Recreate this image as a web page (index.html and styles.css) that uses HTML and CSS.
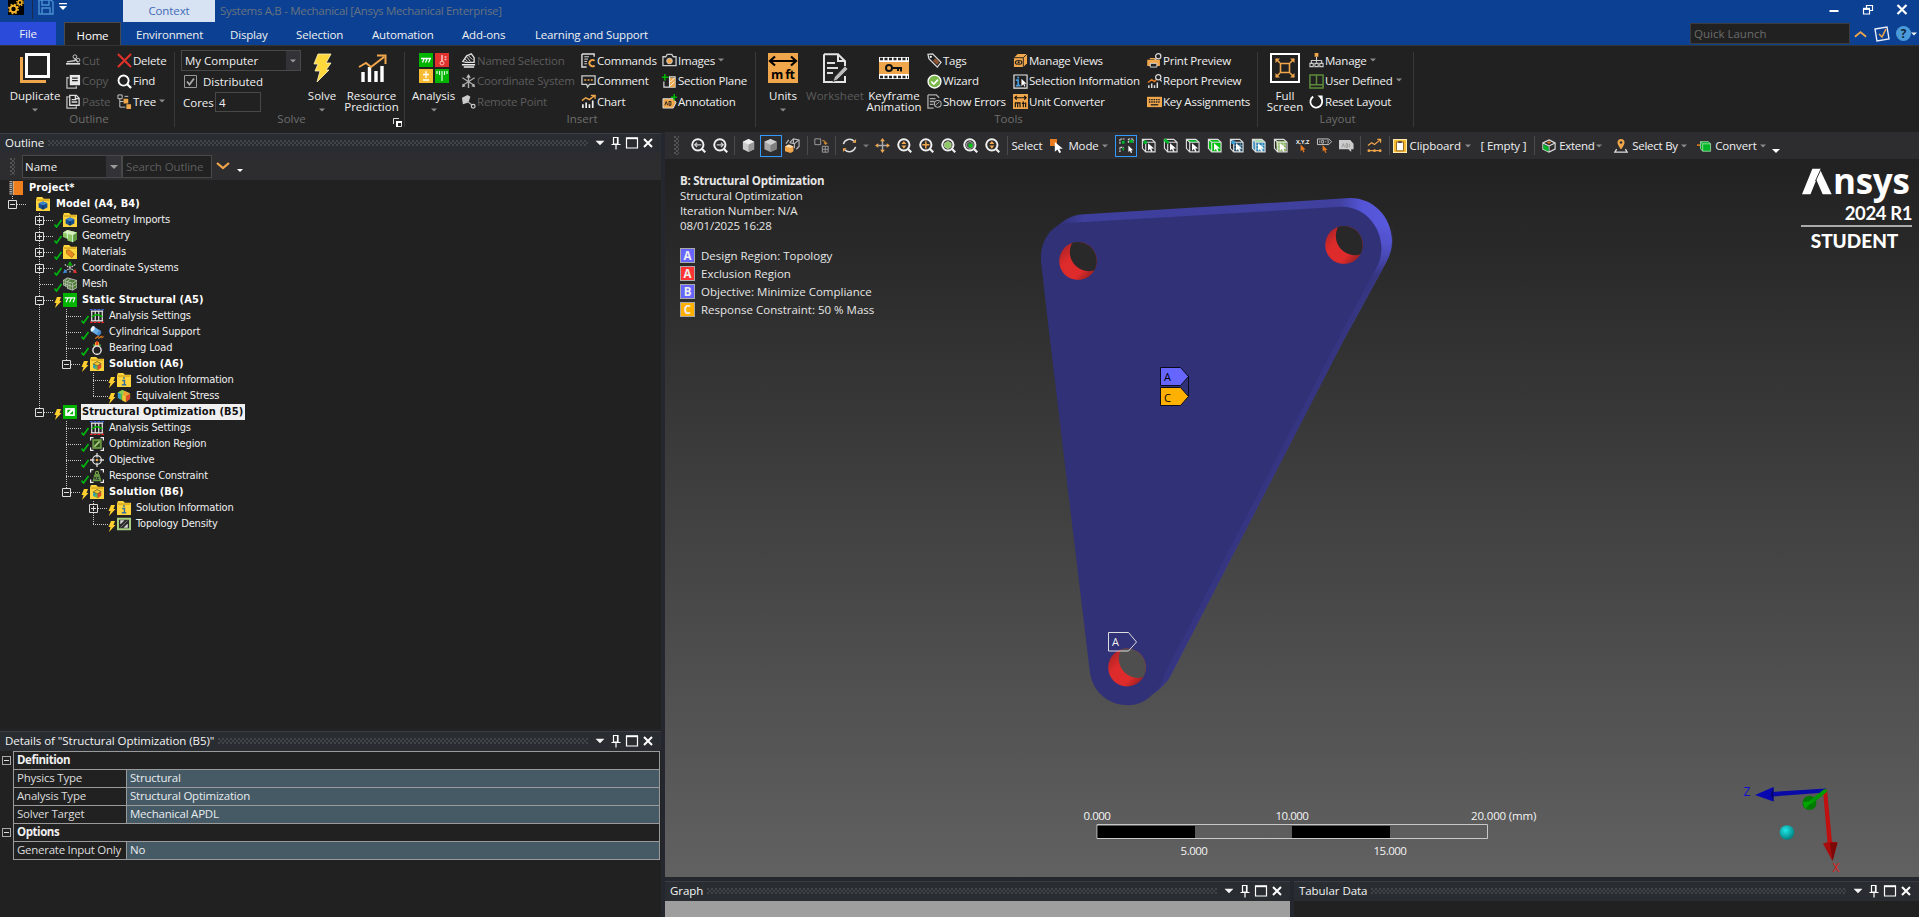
FILE: index.html
```html
<!DOCTYPE html>
<html lang="en">
<head>
<meta charset="utf-8">
<title>Systems A,B - Mechanical [Ansys Mechanical Enterprise]</title>
<link rel="stylesheet" href="styles.css">
</head>
<body>
<svg class="defs" aria-hidden="true">
<defs>
<symbol id="down" viewBox="0 0 8 8"><path d="M0 2h8L4 6z" fill="currentColor"/></symbol>
<symbol id="pin" viewBox="0 0 16 16"><path d="M5.500 2.500h4.500v6.500h-4.500zM3.500 9.500h9M8 9.500v5M9.500 3v6" fill="none" stroke="#fff" stroke-width="1.200"/></symbol>
<symbol id="max" viewBox="0 0 16 16"><path d="M2.500 3h11v10h-11z" fill="none" stroke="#fff" stroke-width="1.200"/><path d="M2 3.300h12" stroke="#fff" stroke-width="1.800"/></symbol>
<symbol id="x" viewBox="0 0 16 16"><path d="M4 4l8 8M12 4l-8 8" stroke="#fff" stroke-width="2"/></symbol>
<symbol id="gears" viewBox="0 0 16 16"><rect width="16" height="16" fill="#000"/><circle cx="5.500" cy="10" r="3.200" fill="none" stroke="#f5b52a" stroke-width="2"/><circle cx="5.500" cy="10" r="4.600" fill="none" stroke="#f5b52a" stroke-width="1.600" stroke-dasharray="1.800 1.810"/><circle cx="12" cy="3.500" r="2" fill="none" stroke="#f5b52a" stroke-width="1.600"/><circle cx="12" cy="3.500" r="3.300" fill="none" stroke="#f5b52a" stroke-width="1.200" stroke-dasharray="1.300 1.290"/></symbol>
<symbol id="save" viewBox="0 0 16 16"><path d="M1 1h12l2 2v12H1zM4 1v5h7V1M4 15V9h8v6" fill="none" stroke="#4a90d2" stroke-width="1.400"/></symbol>
<symbol id="cut" viewBox="0 0 16 16"><path d="M0 11.500h15" stroke="#ddd" stroke-width="1.800"/><path d="M1 9.500l9-1.500M9 6l4 4" stroke="#ccc" stroke-width="1.500"/><circle cx="9.500" cy="4" r="2" fill="none" stroke="#ccc"/><circle cx="13" cy="7.500" r="1.800" fill="none" stroke="#ccc"/></symbol>
<symbol id="copy" viewBox="0 0 16 16"><path d="M3 4H1v11h10v-2" fill="none" stroke="#bbb" stroke-width="1.400"/><path d="M4 1h11v11H4z" fill="#e8e8e8"/><path d="M6.500 4.500h6M6.500 7h6" stroke="#222" stroke-width="1.300"/></symbol>
<symbol id="paste" viewBox="0 0 16 16"><path d="M3 3H1v12h10v-2" fill="none" stroke="#bbb" stroke-width="1.400"/><path d="M4 1.500h7l3 3V12H4z" fill="#222" stroke="#ddd" stroke-width="1.400"/><path d="M10 1.500V5h4M6 6h5M6 8.500h6" fill="none" stroke="#ddd" stroke-width="1.400"/></symbol>
<symbol id="del" viewBox="0 0 16 16"><path d="M1 1l14 14M15 1L1 15" stroke="#e0322c" stroke-width="2.200"/></symbol>
<symbol id="find" viewBox="0 0 16 16"><circle cx="7" cy="7" r="5.400" fill="none" stroke="#fff" stroke-width="2"/><path d="M11 11l4 4" stroke="#fff" stroke-width="2.400"/></symbol>
<symbol id="treei" viewBox="0 0 16 16"><path d="M3 5v9h6M3 8h4" fill="none" stroke="#ccc"/><path d="M1 1h4.500v4H1z" fill="none" stroke="#ccc"/><path d="M7 5h5v5H7zM10 11h5v5h-5z" fill="#f0a64a"/><path d="M8 2.500h4" stroke="#ccc"/></symbol>
<symbol id="named" viewBox="0 0 16 16"><path d="M2 9l4-6 5-2 3 4v5H5z" fill="none" stroke="#ddd" stroke-width="1.500"/><path d="M6 4l4 5M4 6l3 3M8 3l4 4" stroke="#ddd"/><path d="M1 12.500h14M3 15h11" stroke="#eee" stroke-width="1.600"/></symbol>
<symbol id="coord" viewBox="0 0 16 16"><path d="M8 1v14M1.500 4L14 12M14.500 4L2 12" stroke="#aaa" stroke-width="1.500"/><path d="M8 0l2.500 4h-5zM1 14l1-4 3 3zM15 14l-1-4-3 3z" fill="#bbb"/></symbol>
<symbol id="coordc" viewBox="0 0 16 16"><path d="M8 2v6M2 4l12 8M14 4L2 12M8 8v6" stroke="#ccc" stroke-width="1.300" stroke-dasharray="2 1"/><path d="M8 0l3 5H5z" fill="#00a800"/><path d="M0 14l2-5 3 4z" fill="#3a8be0"/><path d="M16 14l-2-5-3 4z" fill="#e0322c"/></symbol>
<symbol id="remote" viewBox="0 0 16 16"><path d="M1 4l6-3 3 2-2 6-6 2z" fill="#ccc"/><path d="M7 8l5 4" stroke="#aaa" stroke-width="1.300"/><circle cx="13" cy="13" r="2" fill="none" stroke="#ccc" stroke-width="1.300"/></symbol>
<symbol id="cmd" viewBox="0 0 16 16"><path d="M1 1h13v3M1 1v14h5" fill="none" stroke="#ddd" stroke-width="1.500"/><path d="M3.500 4h5M3.500 6.500h4M3.500 9h3M3.500 11.500h3" stroke="#ddd"/><path d="M14.500 8.300a3.300 3.300 0 1 0 0 5" fill="none" stroke="#f0a64a" stroke-width="2"/></symbol>
<symbol id="comment" viewBox="0 0 16 16"><path d="M1 2h14v9H9l-2 3-1-3H1z" fill="none" stroke="#ccc" stroke-width="1.400"/><path d="M3.500 6.500h2M7 6.500h2M10.500 6.500h2" stroke="#f0a64a" stroke-width="1.600"/></symbol>
<symbol id="chart" viewBox="0 0 16 16"><path d="M2 15v-4M5.500 15V9M9 15v-4M12.500 15V7" stroke="#eee" stroke-width="1.800"/><path d="M1 7l4-3 4 2 5-4M10.500 1.500H15V5" fill="none" stroke="#f0a64a" stroke-width="1.500"/></symbol>
<symbol id="cam" viewBox="0 0 16 16"><path d="M1 4h3l1.500-2.500h5L12 4h3v9.500H1z" fill="none" stroke="#ccc" stroke-width="1.400"/><circle cx="8" cy="8.500" r="3" fill="#f0a64a" stroke="#ccc"/></symbol>
<symbol id="section" viewBox="0 0 16 16"><path d="M3 0v7M0 3.500h7" stroke="#00b400" stroke-width="1.600"/><path d="M2 8v6h6M8 3h6v11H8z" fill="none" stroke="#ddd" stroke-width="1.200"/><path d="M8.500 4h5.500v10H8.500z" fill="#f0a64a"/><path d="M8.500 9l5-5M8.500 13l5-5" stroke="#fff"/></symbol>
<symbol id="annot" viewBox="0 0 16 16"><path d="M1 5h11l3 4-3 6H1z" fill="#f0a64a" stroke="#ddd"/><path d="M3 12l1.500-4L6 12M7.500 8v4h2V8z" fill="none" stroke="#222"/><path d="M13 0v7M9.500 3.500h6.500" stroke="#00b400" stroke-width="1.600"/></symbol>
<symbol id="tag" viewBox="0 0 16 16"><path d="M1 1.500l5-.5 9 9-4 5-9-9z" fill="none" stroke="#ddd" stroke-width="1.300"/><path d="M7.500 7l4.500 4" stroke="#8a5230" stroke-width="4"/><circle cx="4" cy="4" r="1.200" fill="#fff"/></symbol>
<symbol id="wiz" viewBox="0 0 16 16"><circle cx="8" cy="8" r="6.900" fill="#7ab648" stroke="#fff" stroke-width="1.400"/><path d="M4.500 8l2.700 2.800L11.800 6" fill="none" stroke="#fff" stroke-width="1.800"/></symbol>
<symbol id="errs" viewBox="0 0 16 16"><path d="M1 1h9l3 3M1 1v14h6M3 5h6M3 8h5M3 11h4" fill="none" stroke="#aaa" stroke-width="1.400"/><circle cx="11.500" cy="10.500" r="3.600" fill="#222" stroke="#aaa" stroke-width="1.200"/><path d="M9 12l4-3.500" stroke="#aaa"/></symbol>
<symbol id="views" viewBox="0 0 16 16"><path d="M1 5l4-4h10v10l-4 4H1z" fill="#f0a64a"/><path d="M1 5h10v10M11 5l4-4" fill="none" stroke="#222"/><ellipse cx="6" cy="10" rx="3.500" ry="2" fill="none" stroke="#222" stroke-width="1.200"/><circle cx="6" cy="10" r="1.200" fill="#222"/></symbol>
<symbol id="selinfo" viewBox="0 0 16 16"><path d="M1 1h14v14H1z" fill="none" stroke="#eee" stroke-width="1.200"/><path d="M3 6.500h2.500V12M3 12.300h5M4.500 3.800h2" fill="none" stroke="#4a9ada" stroke-width="1.800"/><path d="M9 5v8l2-2 1.200 2.500 1-.6L12 10.500h2.500z" fill="#fff"/></symbol>
<symbol id="conv" viewBox="0 0 16 16"><path d="M0 0h16v16H0z" fill="#f0a64a"/><path d="M2 4h12M4 2L2 4l2 2M12 2l2 2-2 2" fill="none" stroke="#111" stroke-width="1.300"/><path d="M2.500 14V9.500h5V14M5 14V9.500M11 14V8M9.500 10h3M13.500 9v5" fill="none" stroke="#111" stroke-width="1.200"/></symbol>
<symbol id="print" viewBox="0 0 16 16"><circle cx="12" cy="3.500" r="2.800" fill="none" stroke="#ddd" stroke-width="1.300"/><path d="M10 6L8 8" stroke="#ddd" stroke-width="1.300"/><path d="M3 6h6M1 8h12v5H1z" fill="#f0a64a" stroke="#f0a64a" stroke-width="1.500"/><path d="M3.500 11h7v4h-7z" fill="#222" stroke="#ddd"/></symbol>
<symbol id="report" viewBox="0 0 16 16"><path d="M2 15v-3M5 15v-5M8 15v-3M11 15V9" stroke="#ddd" stroke-width="1.600"/><path d="M1 9l4-3 3 2 2-2" fill="none" stroke="#e57d22" stroke-width="1.500"/><circle cx="12" cy="3.500" r="2.800" fill="none" stroke="#ddd" stroke-width="1.300"/><path d="M14 6l1.500 2" stroke="#ddd" stroke-width="1.300"/></symbol>
<symbol id="keys" viewBox="0 0 16 16"><path d="M0 3h16v11H0z" fill="#f0a64a"/><path d="M2 6h12M2 8.500h12" stroke="#222" stroke-width="1.500" stroke-dasharray="1.600 .9"/><path d="M4 11.500h8" stroke="#222" stroke-width="1.400"/></symbol>
<symbol id="org" viewBox="0 0 16 16"><path d="M8 4v6M2.500 11V8h11v3M1 11h3.500v3.500H1zM6.300 11h3.500v3.500H6.300zM11.500 11H15v3.500h-3.500z" fill="none" stroke="#ccc" stroke-width="1.200"/><path d="M6 0h4v4H6z" fill="#f0a64a"/></symbol>
<symbol id="user" viewBox="0 0 16 16"><path d="M1 1h14v14H1zM1 11.500h14M8 1v10" fill="none" stroke="#5c8a3a" stroke-width="1.600"/></symbol>
<symbol id="reset" viewBox="0 0 16 16"><path d="M4.500 2.800A6.300 6.300 0 1 0 12.500 4" fill="none" stroke="#fff" stroke-width="1.900"/><path d="M9 1.500h5.500V7z" fill="#fff"/></symbol>

<symbol id="lens" viewBox="0 0 16 16"><circle cx="7.300" cy="7.300" r="6" fill="none" stroke="#f0f0f0" stroke-width="2.100"/><path d="M11.500 11.500l3.700 3.700" stroke="#f0f0f0" stroke-width="2.400"/></symbol>
<symbol id="cube" viewBox="0 0 16 16"><path d="M8 1l6 3v8l-6 3-6-3V4z" fill="#ccc"/><path d="M8 7l6-3v8l-6 3z" fill="#999"/><path d="M8 1l6 3-6 3-6-3z" fill="#eee"/></symbol>
<symbol id="cube2" viewBox="0 0 16 16"><path d="M8 1l6.500 3v8L8 15l-6.500-3V4z" fill="#a8a8a8"/><path d="M8 7.500L14.500 4v8L8 15z" fill="#808080"/><path d="M8 1l6.500 3L8 7.500 1.500 4z" fill="#d0d0d0"/></symbol>
<symbol id="cubeb" viewBox="0 0 16 16"><path d="M1.500 1.500h10l3.500 3v10.300H5L1.500 11zM1.500 1.500L5 4.500h10M5 4.500v10" fill="none" stroke="#ddd" stroke-width="1.200"/></symbol>
<symbol id="cur" viewBox="0 0 16 16"><path d="M7.500 5.500v8l2-1.800 1.400 3 1.400-.6-1.300-3H14z" fill="#fff"/></symbol>

<symbol id="check" viewBox="0 0 8 9"><path d="M.5 5.500l2 2.500L7.500 1" fill="none" stroke="#00b010" stroke-width="1.800"/></symbol>
<symbol id="bolt" viewBox="0 0 8 11"><path d="M3 0h4L5.500 4H7.500L1 11l1.500-5H.5z" fill="#ffcf30"/></symbol>
<symbol id="book" viewBox="0 0 16 16"><path d="M5 0h11v16H5z" fill="#ee7f1e"/><path d="M4.800 0v16" stroke="#f8e0c8"/><path d="M2 0v16" stroke="#aaa" stroke-width="3" stroke-dasharray="1.500 .7"/></symbol>
<symbol id="fold" viewBox="0 0 16 16"><path d="M0 3l1-3h6l2 2h7v14H0z" fill="#ffd33c"/><path d="M1 3.500h14" stroke="#b88a10"/></symbol>
<symbol id="f-model" viewBox="0 0 16 16"><use href="#fold"/><path d="M8 5l5 2v5l-5 2.500L3 12V7z" fill="#154f90"/><path d="M8 5l5 2-5 2.500L3 7z" fill="#3b86cc"/><path d="M8 9.500V14" stroke="#0b2038"/></symbol>
<symbol id="f-mat" viewBox="0 0 16 16"><use href="#fold"/><path d="M4 6l3-.5 6 5-3 4-6-5z" fill="#ee8a22" stroke="#8a5a10" stroke-width=".7"/></symbol>
<symbol id="f-info" viewBox="0 0 16 16"><use href="#fold"/><path d="M6 8.500h2.500V13M5.500 13.500h5M7 5.800h2" fill="none" stroke="#356fa0" stroke-width="1.700"/></symbol>
<symbol id="f-sol" viewBox="0 0 16 16"><use href="#fold"/><g transform="translate(3 4.500) scale(.7)"><path d="M1 5l6-4 7 3v7l-6 4-7-4z" fill="#69b545"/><path d="M8 8l6-4v7l-6 4z" fill="#e04a28"/><path d="M1 5l3 2v6l-3-2z" fill="#2b9bd0"/><path d="M1 5l6-4 7 3-6 4z" fill="#f2c230" stroke="#333" stroke-width=".8"/></g></symbol>
<symbol id="stress" viewBox="0 0 16 16"><path d="M1 4l5-3 9 4v6l-5 4-9-5z" fill="#58b848"/><path d="M10 8l5-3v6l-5 4z" fill="#e04a28"/><path d="M6 6l4 2v7l-4-2z" fill="#f4c330"/><path d="M1 4l3 1v7l-3-2z" fill="#2b9bd0"/><path d="M1 4l5-3 9 4-5 3z" fill="#8ccf50"/><path d="M8 2l7 3-5 3-3-1z" fill="#f4a030"/></symbol>
<symbol id="geo" viewBox="0 0 16 16"><path d="M0 4l5-3 11 3v8l-5 3-6-2v-2l-5-2z" fill="#8fc765"/><path d="M11 7l5-3v8l-5 3z" fill="#5f9a40"/><path d="M0 4l5-3 11 3-5 3z" fill="#d5efc0"/><path d="M5 5v6M11 7v8" stroke="#dfe"/></symbol>
<symbol id="mesh" viewBox="0 0 16 16"><path d="M0 4l5-3 11 3v8l-5 3-6-2v-2l-5-2z" fill="#4f7d35" stroke="#ccc" stroke-width=".9"/><path d="M0 4l11 3 5-3M11 7v8M3 5v6M5.500 5v8M8 5.500V14M0 7l11 4 5-3M5 1l-2 3M9 2L5 5" fill="none" stroke="#ccc" stroke-width=".8"/></symbol>
<symbol id="stat" viewBox="0 0 16 16"><path d="M0 0h16v16H0z" fill="#00b400"/><path d="M2 5.500h12M5.500 6l-2 4.500M9.500 6l-2 4.500M13.500 6l-2 4.500" stroke="#fff" stroke-width="1.300"/></symbol>
<symbol id="aset" viewBox="0 0 16 16"><path d="M2 2.500v11M6 2.500v11M10 2.500v11M14 2.500v11M1 2.500h14M1 13.500h14" stroke="#eee" stroke-width="1.300"/><path d="M2 9q6-5 12 0" fill="none" stroke="#00b400" stroke-width="1.600"/><path d="M0 .8h16" stroke="#3c5ee0" stroke-width="1.500" stroke-dasharray="3 1.300"/><path d="M0 15.300h16" stroke="#f02020" stroke-width="1.500" stroke-dasharray="3 1.300"/></symbol>
<symbol id="cyl" viewBox="0 0 16 16"><path d="M4 1.500l8 5-3 5.500-8-5z" fill="#6aaee8"/><ellipse cx="3" cy="4.300" rx="2" ry="3.200" transform="rotate(30 3 4.300)" fill="#eaf4ff"/><ellipse cx="10.500" cy="9.200" rx="2" ry="3.200" transform="rotate(30 10.500 9.200)" fill="#4a8ccc"/><path d="M6 15.500l4-3M9.500 15.500l4-3M13 15l2.500-2" stroke="#e07a22" stroke-width="1.300"/></symbol>
<symbol id="bear" viewBox="0 0 16 16"><path d="M5 6L6 1h4l1 5z" fill="#f2a22c"/><path d="M7 0h2v5H7z" fill="#e03a20"/><path d="M4 4l1.500 3M12 4l-1.500 3" stroke="#3cc040" stroke-width="1.400"/><circle cx="8" cy="10.500" r="4.700" fill="#222" stroke="#ddd" stroke-width="1.700"/></symbol>
<symbol id="topo" viewBox="0 0 16 16"><path d="M0 0h16v16H0z" fill="#00b400"/><path d="M2.500 3.500h11v9h-11z" fill="#fff"/><path d="M5 5.500h4L5 9.500zM11.500 10.500h-4l4-4z" fill="#00b400"/></symbol>
<symbol id="dens" viewBox="0 0 16 16"><path d="M1 2h14v12H1z" fill="#2a2a2a" stroke="#a8d080" stroke-width="2.400"/><path d="M4 12L12 4M4 4h4l-4 4zM12 12H8l4-4z" fill="#ddd" stroke="#ddd" stroke-width=".5"/></symbol>
<symbol id="oreg" viewBox="0 0 16 16"><path d="M.7 4V.7H4M12 .7h3.300V4M15.300 12v3.300H12M4 15.300H.7V12" fill="none" stroke="#eee" stroke-width="1.400"/><path d="M3.500 3.500h9v9h-9z" fill="#33501f" stroke="#77aa4c" stroke-width="1.600"/><path d="M5 11l6-6" stroke="#a8d080" stroke-width="2"/></symbol>
<symbol id="obj" viewBox="0 0 16 16"><circle cx="8" cy="8" r="5" fill="none" stroke="#ddd" stroke-width="1.500"/><path d="M8 0v5M8 11v5M0 8h5M11 8h5" stroke="#ddd" stroke-width="1.500"/><circle cx="8" cy="8" r="1.500" fill="#f0a64a"/></symbol>
<symbol id="resp" viewBox="0 0 16 16"><path d="M.7 4V.7H4M12 .7h3.300V4M15.300 12v3.300H12M4 15.300H.7V12" fill="none" stroke="#eee" stroke-width="1.400"/><circle cx="8" cy="4.500" r="1.800" fill="none" stroke="#77aa4c" stroke-width="1.300"/><path d="M5 6h6l2 8H3z" fill="#6a9c42"/><path d="M5.500 9v3M7.500 9l-2 1.500 2 1.500M10.500 9.500h-2v2.500h2" fill="none" stroke="#223" stroke-width=".9"/></symbol>
</defs>
</svg>

<header class="top">
  <div class="titlebar">
    <div class="quick">
      <svg class="s16"><use href="#gears"/></svg><i class="tsep"></i><svg class="s16"><use href="#save"/></svg>
      <svg class="qdrop" viewBox="0 0 8 8"><path d="M0 0h8v1.300H0zM0 3h8L4 7z" fill="#fff"/></svg>
    </div>
    <div class="context">Context</div>
    <div class="apptitle">Systems A,B - Mechanical [Ansys Mechanical Enterprise]</div>
    <div class="winbtns">
      <svg viewBox="0 0 16 16"><path d="M3.500 9h9" stroke="#fff" stroke-width="2"/></svg>
      <svg viewBox="0 0 16 16"><path d="M3.500 7h6v5h-6zM6.500 6.500V3.500h6v5h-3" fill="none" stroke="#fff" stroke-width="1.200"/><path d="M3 6.800h7" stroke="#fff" stroke-width="2"/></svg>
      <svg viewBox="0 0 16 16"><path d="M3.500 3l9 9M12.500 3l-9 9" stroke="#fff" stroke-width="2.200"/></svg>
    </div>
  </div>
  <nav class="tabs">
    <div class="tab file">File</div>
    <div class="tab home">Home</div>
    <div class="tab t-env">Environment</div>
    <div class="tab t-dis">Display</div>
    <div class="tab t-sel">Selection</div>
    <div class="tab t-aut">Automation</div>
    <div class="tab t-add">Add-ons</div>
    <div class="tab t-lrn">Learning and Support</div>
    <div class="launch">
      <div class="qinput">Quick Launch</div>
      <svg class="chev" viewBox="0 0 14 8"><path d="M1 7l6-5 6 5" fill="none" stroke="#f0a64a" stroke-width="2"/></svg>
      <svg class="s16" viewBox="0 0 16 16"><path d="M1 3l12-2 2 12-12 2z" fill="none" stroke="#e8eefc" stroke-width="1.400"/><path d="M5 8l3 3 4-8" fill="none" stroke="#f0a64a" stroke-width="1.600"/></svg>
      <div class="help">?</div><svg class="d6"><use href="#down"/></svg>
    </div>
  </nav>
</header>

<section class="ribbon">
  <div class="group g-outline">
    <div class="gbody">
      <div class="big"><svg viewBox="0 0 30 30"><path d="M0 4h3v23h23v3H0z" fill="#f0a64a"/><path d="M6.500 1.500h22v22h-22z" fill="#222" stroke="#fff" stroke-width="3"/></svg><span>Duplicate</span><svg class="d6 dim"><use href="#down"/></svg></div>
      <div class="col c51 off"><p><svg><use href="#cut"/></svg>Cut</p><p><svg><use href="#copy"/></svg>Copy</p><p><svg><use href="#paste"/></svg>Paste</p></div>
      <div class="col"><p><svg><use href="#del"/></svg>Delete</p><p><svg><use href="#find"/></svg>Find</p><p><svg><use href="#treei"/></svg>Tree<svg class="d6 dim"><use href="#down"/></svg></p></div>
    </div>
    <div class="glabel">Outline</div>
  </div>
  <div class="group g-solve">
    <div class="gbody">
      <div class="form">
        <div class="combo"><span>My Computer</span><b><svg class="d6"><use href="#down"/></svg></b></div>
        <div class="chk"><svg viewBox="0 0 13 13"><path d="M.5.5h12v12H.5z" fill="#222" stroke="#999"/><path d="M3 6.500l2.500 3L10 3.500" fill="none" stroke="#aaa" stroke-width="1.800"/></svg>Distributed</div>
        <div class="cores"><span>Cores</span><div class="num">4</div></div>
      </div>
      <div class="big b-solve"><svg viewBox="0 0 30 30"><path d="M11 1h13l-5 9h5l-5 7h3L10 29l3-11H8l3-7H7z" fill="#ffd83c" stroke="#fff3c0" stroke-width=".8"/></svg><span>Solve</span><svg class="d6 dim"><use href="#down"/></svg></div>
      <div class="big b-res"><svg viewBox="0 0 30 30"><path d="M6 29V19M12.500 29V14M19 29V18M25 29V13" stroke="#fff" stroke-width="3.400"/><path d="M2 14l7-4 5 4L27 4M20 2.500h8.500V11" fill="none" stroke="#f0a64a" stroke-width="2"/></svg><span>Resource<br>Prediction</span></div>
    </div>
    <div class="glabel">Solve</div>
    <svg class="launcher" viewBox="0 0 9 9"><path d="M.5 6V.5H6M8.500 3.500v5h-5v-5z" fill="none" stroke="#ddd"/><path d="M3 3h6v2H5v4H3z" fill="#fff"/></svg>
  </div>
  <div class="group g-insert">
    <div class="gbody">
      <div class="big b-ana"><svg viewBox="0 0 30 30"><path d="M0 0h14v14H0zM16 16h14v14H16z" fill="#00b400"/><path d="M16 0h14v14H16z" fill="#e0322c"/><path d="M0 16h14v14H0z" fill="#f7bc34"/><path d="M2 5.500h10M5 6l-1.500 3.500M8 6L6.500 9.500M11 6L9.500 9.500M7 18v7M4 21.500h6M4 27h6" stroke="#fff" stroke-width="1.300"/><path d="M23 2v7M25.500 4h2M25.500 6.500h2" stroke="#fbb" stroke-width="1.600"/><circle cx="23" cy="10" r="2" fill="none" stroke="#fbb"/><path d="M18 18v3M20.500 18v4M23 18v10M25.500 18v4M28 18v3" stroke="#dfd" stroke-width="1.200"/></svg><span>Analysis</span><svg class="d6 dim"><use href="#down"/></svg></div>
      <div class="col c120 off"><p><svg><use href="#named"/></svg>Named Selection</p><p><svg><use href="#coord"/></svg>Coordinate System</p><p><svg><use href="#remote"/></svg>Remote Point</p></div>
      <div class="col c81"><p><svg><use href="#cmd"/></svg>Commands</p><p><svg><use href="#comment"/></svg>Comment</p><p><svg><use href="#chart"/></svg>Chart</p></div>
      <div class="col"><p><svg><use href="#cam"/></svg>Images<svg class="d6 dim"><use href="#down"/></svg></p><p><svg><use href="#section"/></svg>Section Plane</p><p><svg><use href="#annot"/></svg>Annotation</p></div>
    </div>
    <div class="glabel">Insert</div>
  </div>
  <div class="group g-tools">
    <div class="gbody">
      <div class="big b-units"><svg viewBox="0 0 30 30"><path d="M0 0h30v30H0z" fill="#f0a64a"/><path d="M2 8h26M7 3.500L2 8l5 4.500M23 3.500L28 8l-5 4.500" fill="none" stroke="#000" stroke-width="2.200"/><text x="15" y="25.500" text-anchor="middle" font-family="Open Sans" font-weight="700" font-size="12.500" textLength="24">m ft</text></svg><span>Units</span><svg class="d6 dim"><use href="#down"/></svg></div>
      <div class="big b-work off"><svg viewBox="0 0 30 30"><path d="M4 1.200h14l7 7V14M25 23v6H4V1.200M18 1v7h7" fill="none" stroke="#e4e4e4" stroke-width="2"/><path d="M7 10h8M7 15h11M7 20h6" stroke="#ddd" stroke-width="1.800"/><path d="M25 13l3 3-11 11-4 1.500L14.500 24z" fill="#bbb" stroke="#222" stroke-width=".8"/></svg><span>Worksheet</span></div>
      <div class="big b-key"><svg viewBox="0 0 30 30"><path d="M0 4h30v22H0z" fill="#fff"/><path d="M1 6h28M1 24h28" stroke="#222" stroke-width="2.600" stroke-dasharray="3 1.500"/><path d="M0 9h30v12H0z" fill="#f0a64a"/><circle cx="10" cy="15" r="3" fill="none" stroke="#111" stroke-width="2"/><path d="M13 15h10M22 15v3.500M19 15v3" stroke="#111" stroke-width="2"/></svg><span>Keyframe<br>Animation</span></div>
      <div class="col c86"><p><svg><use href="#tag"/></svg>Tags</p><p><svg><use href="#wiz"/></svg>Wizard</p><p><svg><use href="#errs"/></svg>Show Errors</p></div>
      <div class="col c135"><p><svg><use href="#views"/></svg>Manage Views</p><p><svg><use href="#selinfo"/></svg>Selection Information</p><p><svg><use href="#conv"/></svg>Unit Converter</p></div>
      <div class="col"><p><svg><use href="#print"/></svg>Print Preview</p><p><svg><use href="#report"/></svg>Report Preview</p><p><svg><use href="#keys"/></svg>Key Assignments</p></div>
    </div>
    <div class="glabel">Tools</div>
  </div>
  <div class="group g-layout">
    <div class="gbody">
      <div class="big b-full"><svg viewBox="0 0 30 30"><path d="M1 1h28v28H1z" fill="none" stroke="#fff" stroke-width="2"/><path d="M10.500 10.500h9v9h-9z" fill="none" stroke="#f0a64a" stroke-width="1.600"/><path d="M10 10L6 6M20 10l4-4M10 20l-4 4M20 20l4 4" stroke="#f0a64a" stroke-width="1.600"/><path d="M5.500 5.500H10L5.500 10zM24.500 5.500H20l4.500 4.500zM5.500 24.500H10L5.500 20zM24.500 24.500H20l4.500-4.500z" fill="#f0a64a"/></svg><span>Full<br>Screen</span></div>
      <div class="col"><p><svg><use href="#org"/></svg>Manage<svg class="d6 dim"><use href="#down"/></svg></p><p><svg><use href="#user"/></svg>User Defined<svg class="d6 dim"><use href="#down"/></svg></p><p><svg><use href="#reset"/></svg>Reset Layout</p></div>
    </div>
    <div class="glabel">Layout</div>
  </div>
</section>

<main class="work">
  <aside class="left">
    <section class="panel outline">
      <div class="phead"><span>Outline</span><i class="dots"></i><svg><use href="#down" x="3.500" y="3.500" width="9" height="9"/></svg><svg><use href="#pin"/></svg><svg><use href="#max"/></svg><svg><use href="#x"/></svg></div>
      <div class="otool">
        <i class="grip"></i>
        <div class="combo"><span>Name</span><b><svg class="d8"><use href="#down"/></svg></b></div>
        <div class="search">Search Outline</div>
        <svg class="chev" viewBox="0 0 14 8"><path d="M1 1l6 5 6-5" fill="none" stroke="#f0a64a" stroke-width="2.200"/></svg>
        <svg class="more" viewBox="0 0 8 8"><path d="M1 2h6L4 5z" fill="#fff"/></svg>
      </div>
      <div class="tree">
        <svg class="guides" width="130" height="352">
          <g fill="none" stroke="#c8c8c8" stroke-dasharray="1 1">
            <path d="M12.500 16v4M17 24.500h10M39.500 33v200M44 40.500h10M44 56.500h10M44 72.500h10M44 88.500h10M40 104.500h14M44 120.500h10M44 232.500h10M66.500 129v56M66 136.500h15M66 152.500h15M66 168.500h15M71 184.500h10M93.500 193v24M93 200.500h15M93 216.500h15M66.500 241v72M66 248.500h15M66 264.500h15M66 280.500h15M66 296.500h15M71 312.500h10M93.500 321v24M98 328.500h10M93 344.500h15"/>
          </g>
          <g fill="#222" stroke="#ddd">
            <path d="M8.500 20.500h8v8h-8zM35.500 36.500h8v8h-8zM35.500 52.500h8v8h-8zM35.500 68.500h8v8h-8zM35.500 84.500h8v8h-8zM35.500 116.500h8v8h-8zM35.500 228.500h8v8h-8zM62.500 180.500h8v8h-8zM62.500 308.500h8v8h-8zM89.500 324.500h8v8h-8z"/>
            <path d="M10 24.500h5M37 40.500h5M39.500 38v5M37 56.500h5M39.500 54v5M37 72.500h5M39.500 70v5M37 88.500h5M39.500 86v5M37 120.500h5M37 232.500h5M64 184.500h5M64 312.500h5M91 328.500h5M93.500 326v5"/>
          </g>
        </svg>
        <div class="row l0 b"><svg><use href="#book"/></svg><span>Project*</span></div>
        <div class="row l1 b"><svg><use href="#f-model"/></svg><span>Model (A4, B4)</span></div>
        <div class="row l2"><svg class="st"><use href="#check"/></svg><svg><use href="#f-model"/></svg><span>Geometry Imports</span></div>
        <div class="row l2"><svg class="st"><use href="#check"/></svg><svg><use href="#geo"/></svg><span>Geometry</span></div>
        <div class="row l2"><svg class="st"><use href="#check"/></svg><svg><use href="#f-mat"/></svg><span>Materials</span></div>
        <div class="row l2"><svg class="st"><use href="#check"/></svg><svg><use href="#coordc"/></svg><span>Coordinate Systems</span></div>
        <div class="row l2"><svg class="st"><use href="#check"/></svg><svg><use href="#mesh"/></svg><span>Mesh</span></div>
        <div class="row l2 b"><svg class="st bt"><use href="#bolt"/></svg><svg><use href="#stat"/></svg><span>Static Structural (A5)</span></div>
        <div class="row l3"><svg class="st"><use href="#check"/></svg><svg><use href="#aset"/></svg><span>Analysis Settings</span></div>
        <div class="row l3"><svg class="st"><use href="#check"/></svg><svg><use href="#cyl"/></svg><span>Cylindrical Support</span></div>
        <div class="row l3"><svg class="st"><use href="#check"/></svg><svg><use href="#bear"/></svg><span>Bearing Load</span></div>
        <div class="row l3 b"><svg class="st bt"><use href="#bolt"/></svg><svg><use href="#f-sol"/></svg><span>Solution (A6)</span></div>
        <div class="row l4"><svg class="st bt"><use href="#bolt"/></svg><svg><use href="#f-info"/></svg><span>Solution Information</span></div>
        <div class="row l4"><svg class="st bt"><use href="#bolt"/></svg><svg><use href="#stress"/></svg><span>Equivalent Stress</span></div>
        <div class="row l2 b"><svg class="st bt"><use href="#bolt"/></svg><svg><use href="#topo"/></svg><span class="picked">Structural Optimization (B5)</span></div>
        <div class="row l3"><svg class="st"><use href="#check"/></svg><svg><use href="#aset"/></svg><span>Analysis Settings</span></div>
        <div class="row l3"><svg class="st"><use href="#check"/></svg><svg><use href="#oreg"/></svg><span>Optimization Region</span></div>
        <div class="row l3"><svg class="st"><use href="#check"/></svg><svg><use href="#obj"/></svg><span>Objective</span></div>
        <div class="row l3"><svg class="st"><use href="#check"/></svg><svg><use href="#resp"/></svg><span>Response Constraint</span></div>
        <div class="row l3 b"><svg class="st bt"><use href="#bolt"/></svg><svg><use href="#f-sol"/></svg><span>Solution (B6)</span></div>
        <div class="row l4"><svg class="st bt"><use href="#bolt"/></svg><svg><use href="#f-info"/></svg><span>Solution Information</span></div>
        <div class="row l4"><svg class="st bt"><use href="#bolt"/></svg><svg><use href="#dens"/></svg><span>Topology Density</span></div>
      </div>
    </section>
    <section class="panel details">
      <div class="phead"><span>Details of "Structural Optimization (B5)"</span><i class="dots"></i><svg><use href="#down" x="3.500" y="3.500" width="9" height="9"/></svg><svg><use href="#pin"/></svg><svg><use href="#max"/></svg><svg><use href="#x"/></svg></div>
      <div class="props">
        <i class="exp"></i><div class="cat">Definition</div>
        <i></i><div class="k">Physics Type</div><div class="v">Structural</div>
        <i></i><div class="k">Analysis Type</div><div class="v">Structural Optimization</div>
        <i></i><div class="k">Solver Target</div><div class="v">Mechanical APDL</div>
        <i class="exp"></i><div class="cat">Options</div>
        <i></i><div class="k last">Generate Input Only</div><div class="v last">No</div>
      </div>
    </section>
  </aside>

  <section class="right">
    <div class="gtool">
      <i class="grip"></i>
      <div class="tb"><svg viewBox="0 0 16 16"><use href="#lens"/><path d="M4 7.300h7M6.500 5L4 7.300l2.500 2.300" fill="none" stroke="#ccc" stroke-width="1.300"/></svg></div>
      <div class="tb"><svg viewBox="0 0 16 16"><use href="#lens"/><path d="M4 7.300h7M8.500 5L11 7.300 8.500 9.600" fill="none" stroke="#ccc" stroke-width="1.300"/></svg></div>
      <i class="vs"></i>
      <div class="tb"><svg><use href="#cube"/></svg></div>
      <div class="tb on"><svg><use href="#cube2"/></svg></div>
      <div class="tb"><svg viewBox="0 0 16 16"><path d="M5 5l4-4 6 1v7l-3 3M5 5l5 1 5-4M10 6v5M1 6l3-4M9 1v4" fill="none" stroke="#bbb" stroke-width="1.200"/><path d="M0 9l4-2 5 2v5l-3 2-6-2z" fill="#f0a64a"/><path d="M0 9l4-2 5 2-3 1.500z" fill="#fbe0b8"/></svg></div>
      <i class="vs"></i>
      <div class="tb"><svg viewBox="0 0 18 18"><path d="M1 1h7v7H1zM10 10h7v7h-7zM13.500 10v7M10 13.500h7" fill="none" stroke="#999" stroke-width="1.200"/><path d="M10 3q4 0 4 4M12 5.500l2 2 2-2" fill="none" stroke="#d08a30" stroke-width="1.300"/></svg></div>
      <i class="vs"></i>
      <div class="tb"><svg viewBox="0 0 16 16"><path d="M1.500 6.500A6.800 6.800 0 0 1 13 3.500M14.500 9.500A6.800 6.800 0 0 1 3 12.500" fill="none" stroke="#ddd" stroke-width="1.600"/><path d="M11 5l4 0 0-4zM5 11H1v4z" fill="#f0a64a"/></svg></div>
      <div class="da"><svg class="d6"><use href="#down"/></svg></div>
      <div class="tb"><svg viewBox="0 0 16 16"><path d="M8 3v10M3 8h10" stroke="#aaa" stroke-width="1.600"/><path d="M8 0l2.500 3.500h-5zM8 16l2.500-3.500h-5zM0 8l3.500-2.500v5zM16 8l-3.500-2.500v5z" fill="#f0a64a"/></svg></div>
      <div class="tb"><svg viewBox="0 0 16 16"><use href="#lens"/><path d="M7.300 3.200L10 6.500H4.600zM7.300 11.400L10 8.100H4.600z" fill="#f0a64a"/></svg></div>
      <div class="tb"><svg viewBox="0 0 16 16"><use href="#lens"/><path d="M7.300 3.500v7.600M3.500 7.300h7.600" stroke="#f0a64a" stroke-width="1.600"/></svg></div>
      <div class="tb"><svg viewBox="0 0 16 16"><use href="#lens"/><path d="M7.300 3.500l3.500 2v4l-3.500 2-3.500-2v-4z" fill="#8fc765" stroke="#cde8b5" stroke-width=".7"/></svg></div>
      <div class="tb"><svg viewBox="0 0 16 16"><use href="#lens"/><path d="M7.300 3.500l3.500 2v4l-3.500 2-3.500-2v-4z" fill="#555" stroke="#ccc" stroke-width=".7"/><path d="M6 6h4v4H6z" fill="#00c810"/></svg></div>
      <div class="tb"><svg viewBox="0 0 16 16"><use href="#lens"/><path d="M7.300 3.200L10 6.500H4.600zM7.300 11.400L10 8.100H4.600z" fill="#f0a64a"/></svg></div>
      <i class="vs"></i>
      <div class="txt t-select">Select</div>
      <div class="txt t-mode"><svg viewBox="0 0 16 16"><path d="M0 0h8v8H0z" fill="#e87a20"/><path d="M5.500 3.500v11l3-2.500 2 4 2.200-1-2-4h4z" fill="#fff"/></svg>Mode<svg class="d6 dim"><use href="#down"/></svg></div>
      <div class="tb on"><svg viewBox="0 0 16 16"><path d="M1 6V1h5M1 15v-5h4M10 1h5v4M10 5V1" fill="none" stroke="#ddd" stroke-width="1.200" stroke-dasharray="2 .8"/><path d="M3 3h3v3H3zM11 2h4v3h-4zM3 11h3l-1.500 3z" fill="#00b428"/><path d="M10 8v7l1.700-1.500 1 2.500 1.300-.6-1-2.400H15z" fill="#fff"/></svg></div>
      <div class="tb"><svg viewBox="0 0 16 16"><use href="#cubeb"/><circle cx="4.500" cy="4.500" r="2" fill="#00b428"/><use href="#cur"/></svg></div>
      <div class="tb"><svg viewBox="0 0 16 16"><use href="#cubeb"/><path d="M1.500 1.500L6 5.500" stroke="#00b428" stroke-width="3"/><use href="#cur"/></svg></div>
      <div class="tb"><svg viewBox="0 0 16 16"><path d="M1.500 1.500h10l3.500 3H5z" fill="#00b428"/><use href="#cubeb"/><use href="#cur"/></svg></div>
      <div class="tb"><svg viewBox="0 0 16 16"><path d="M1.500 1.500h10l3.500 3v10.300H5L1.500 11z" fill="#00c010"/><use href="#cubeb"/><use href="#cur"/></svg></div>
      <div class="tb"><svg viewBox="0 0 16 16"><path d="M5 4.500h10v10H5z" fill="#1d4a6c"/><path d="M5 8h10M5 11.500h10M8.500 4.500v10M12 4.500v10" stroke="#79a" stroke-width=".8"/><use href="#cubeb"/><circle cx="4.500" cy="4.500" r="2.200" fill="#3fa0d8"/><use href="#cur"/></svg></div>
      <div class="tb"><svg viewBox="0 0 16 16"><path d="M1.500 1.500h10l3.500 3H5z" fill="#9fdca8"/><path d="M1.500 1.500L5 4.500h10v10H5L1.500 11z" fill="#2b86b8"/><path d="M5 8h10M5 11.500h10M8.500 4.500v10M12 4.500v10M3 3v10" stroke="#9cc8dc" stroke-width=".8"/><use href="#cubeb"/><use href="#cur"/></svg></div>
      <div class="tb"><svg viewBox="0 0 16 16"><path d="M3 3h11v11H4z" fill="#8cb860"/><path d="M4 7.500h10M4 11h10M7.500 4v10M11 4v10" stroke="#cdb" stroke-width=".8"/><use href="#cubeb"/><use href="#cur"/></svg></div>
      <div class="tb"><svg viewBox="0 0 16 16"><text x="8" y="6" text-anchor="middle" class="xyz">X,Y,Z</text><path d="M6 7v7l1.700-1.500 1.200 3 1.300-.6-1.200-2.600h2.200z" fill="#e87a20"/></svg></div>
      <div class="tb"><svg viewBox="0 0 16 16"><path d="M.5 1h12l3 3-3 3H.5z" fill="none" stroke="#ccc"/><path d="M3 2.500v3M5 2.500h2v3H5zM8.500 4h1.500M11 2.500h1v3h-1" fill="none" stroke="#ccc" stroke-width=".8"/><path d="M6 7.500v7l1.700-1.500 1.200 3 1.300-.6-1.200-2.600h2.200z" fill="#e87a20"/></svg></div>
      <div class="tb"><svg viewBox="0 0 16 16"><path d="M0 2h12l3.500 4v6H13v3l-3-3H0z" fill="#ccc"/><path d="M3 10l1.500-4L6 10M7.500 6v4h1.500V6zM11 6v4" fill="none" stroke="#999"/></svg></div>
      <i class="vs"></i>
      <div class="tb"><svg viewBox="0 0 16 16"><path d="M1 8l4-3 3 2 6-5M11 1.500h3.500V5M1 13.500h14" fill="none" stroke="#f0a64a" stroke-width="1.300"/><circle cx="2" cy="13.500" r="1.500" fill="#f0a64a"/><circle cx="8" cy="13.500" r="1.500" fill="#f0a64a"/><circle cx="14" cy="13.500" r="1.500" fill="#f0a64a"/></svg></div>
      <i class="vs"></i>
      <div class="txt t-clip"><svg viewBox="0 0 16 16"><path d="M0 0h16v16H0z" fill="#fff3c0"/><path d="M1 1h14v14H1z" fill="#f7bc34"/><path d="M4 3.500h8v10H4z" fill="#fff" stroke="#8a5a10"/><path d="M6 2.500h4v2H6z" fill="#444"/></svg>Clipboard<svg class="d6 dim"><use href="#down"/></svg></div>
      <div class="txt t-empty">[ Empty ]</div>
      <i class="vs"></i>
      <div class="txt t-ext"><svg viewBox="0 0 16 16"><path d="M8 1l7 3.500v7L8 15l-7-3.500v-7zM8 8l7-3.500M8 8v7M1 4.500L8 8" fill="none" stroke="#ddd" stroke-width="1.300"/><path d="M1.500 6L7.500 9v5.500l-6-3z" fill="#00b428"/><path d="M8 2v4M6 4h4" stroke="#e87a20"/></svg>Extend<svg class="d6 dim"><use href="#down"/></svg></div>
      <div class="txt t-by"><svg viewBox="0 0 16 16"><path d="M3 11.500L1 15h14l-2-3.500" fill="none" stroke="#ddd" stroke-width="1.500"/><path d="M8 0a4 4 0 0 1 4 4c0 3-4 8-4 8S4 7 4 4a4 4 0 0 1 4-4z" fill="#f0a64a"/><circle cx="8" cy="4" r="1.500" fill="#333"/></svg>Select By<svg class="d6 dim"><use href="#down"/></svg></div>
      <div class="txt t-conv"><svg viewBox="0 0 16 16"><path d="M0 7h3.500" stroke="#e87a20" stroke-width="1.800"/><path d="M4 3h9l2.500 2.500V14h-9L4 11z" fill="#00b428" stroke="#bfe8bf" stroke-width=".8"/><path d="M4 3l2.500 2.500h9M6.500 5.500V14" fill="none" stroke="#bfe8bf" stroke-width=".8"/></svg>Convert<svg class="d6 dim"><use href="#down"/></svg></div>
      <svg class="more" viewBox="0 0 8 8"><path d="M0 2h8L4 6z" fill="#fff"/></svg>
    </div>

    <div class="view">
      <svg class="scene" viewBox="665 159 1254 718">
        <defs>
          <linearGradient id="rim" gradientUnits="userSpaceOnUse" x1="1060" y1="0" x2="1392" y2="0"><stop offset="0" stop-color="#31317a"/><stop offset=".07" stop-color="#3e3e9c"/><stop offset=".84" stop-color="#40409f"/><stop offset=".91" stop-color="#5454d6"/><stop offset="1" stop-color="#5a5ae0"/></linearGradient>
          <linearGradient id="rimdown" gradientUnits="userSpaceOnUse" x1="0" y1="225" x2="0" y2="275"><stop offset="0" stop-color="#353582" stop-opacity="0"/><stop offset=".35" stop-color="#4343a8" stop-opacity=".3"/><stop offset="1" stop-color="#353582"/></linearGradient>
          <linearGradient id="bore" x1="0" y1="0" x2="1" y2="1"><stop offset="0" stop-color="#8c2026"/><stop offset=".35" stop-color="#dd2a2a"/><stop offset=".65" stop-color="#df2b2b"/><stop offset=".9" stop-color="#7a1c20"/></linearGradient>
          <radialGradient id="ball" cx=".4" cy=".35" r=".7"><stop offset="0" stop-color="#20e8e8"/><stop offset="1" stop-color="#007878"/></radialGradient>
          <clipPath id="h1"><ellipse cx="1078" cy="261" rx="18.800" ry="19"/></clipPath>
          <clipPath id="h2"><ellipse cx="1344" cy="245" rx="18.800" ry="19"/></clipPath>
          <clipPath id="h3"><ellipse cx="1127" cy="667.500" rx="18.800" ry="19"/></clipPath>
        </defs>
        <path d="M1050 233C1062 221 1070 215 1084 214.300L1350 198C1374 198 1391 217 1392 240C1392 252 1388 259 1383 268L1343.700 340 1172 673C1168 682 1160 689 1153 694L1100 500Z" fill="url(#rim)"/>
        <path d="M1340 225H1393V241C1392 252 1388 259 1383 268L1343.700 340 1172 673C1168 682 1160 689 1153 694L1150 660Z" fill="url(#rimdown)"/>
        <path d="M1041 262C1039.500 243 1050 224 1068 223L1341 206.800C1364 206 1381 226 1381.500 248C1381 260 1378 266 1372 275L1337.700 340 1165 673C1163 680 1160 688 1153 694C1146 701 1138 705.300 1128 705.300C1107 705 1091 690 1089.500 669L1050 340Z" fill="#313178"/>
        <g clip-path="url(#h1)"><rect x="1058" y="240" width="42" height="42" fill="url(#bore)"/><circle cx="1089" cy="252" r="19.200" fill="#292929"/></g>
        <g clip-path="url(#h2)"><rect x="1324" y="224" width="42" height="42" fill="url(#bore)"/><circle cx="1355" cy="236" r="19.200" fill="#282828"/></g>
        <g clip-path="url(#h3)"><rect x="1107" y="647" width="42" height="42" fill="url(#bore)"/><circle cx="1138" cy="658.700" r="19.200" fill="#4e4e4e"/></g>
        <g class="flags">
          <path d="M1160.500 367.500h20l8 9-8 9h-20z" fill="#6666ff" stroke="#0a0a1c"/><path d="M1160.500 387.500h20l8 9-8 9h-20z" fill="#ffb000" stroke="#0a0a1c"/><path d="M1188.500 376v21" stroke="#0a0a1c"/>
          <path d="M1108.500 632.500h20l8 9.500-8 9h-20z" fill="none" stroke="#ddd"/>
          <text x="1164" y="380.500">A</text><text x="1164" y="401.500">C</text><text x="1112" y="646">A</text>
        </g>
        <g class="ruler">
          <path d="M1097 824.500h390.500v14H1097z" fill="none" stroke="#c8c8c8"/><path d="M1097.500 826h97.500v12h-97.500zM1292 826h98v12h-98z" fill="#000"/>
          <text x="1097" y="820">0.000</text><text x="1292" y="820">10.000</text><text x="1471" y="820" class="start">20.000 (mm)</text><text x="1194" y="855">5.000</text><text x="1390" y="855">15.000</text>
        </g>
        <path d="M1826 788.500L1772 792v4.500l54-4z" fill="#0a0aa8"/><path d="M1755 795l18.500-8v14.500z" fill="#0808b0"/><path d="M1773.500 787v14.500l-3-7z" fill="#050570"/>
        <path d="M1823 790l4-.5 5 53-4.500.5z" fill="#c01010"/><path d="M1823 843.500q7-3 14.500-1L1832.500 861z" fill="#a80c0c"/><path d="M1830 843l7.500-.5-5 18.500z" fill="#7c0808"/>
        <circle cx="1809.500" cy="803" r="7" fill="#007a00"/><path d="M1825 791l-14 11" stroke="#009a00" stroke-width="4" stroke-linecap="round"/><path d="M1803 802l10-1-8 8z" fill="#00a400"/>
        <circle cx="1787" cy="832.500" r="7.300" fill="url(#ball)"/>
        <text x="1743.500" y="796" class="ax" fill="#1010d0">Z</text><text x="1832.500" y="872" class="ax" fill="#e01818">X</text>
      </svg>
      <div class="legend">
        <h1>B: Structural Optimization</h1>
        <p>Structural Optimization</p><p>Iteration Number: N/A</p><p>08/01/2025 16:28</p>
        <ul>
          <li><b class="a">A</b>Design Region: Topology</li>
          <li><b class="r">A</b>Exclusion Region</li>
          <li><b class="a">B</b>Objective: Minimize Compliance</li>
          <li><b class="c">C</b>Response Constraint: 50 % Mass</li>
        </ul>
      </div>
      <div class="brand">
        <div class="logo"><svg viewBox="0 0 34 28"><path d="M0 27L11 0h9L9 27z" fill="#fff"/><path d="M14.500 10L19 0.500 31.500 27h-9.500z" fill="#fff"/><path d="M20.300 0L14.300 13" stroke="#252525" stroke-width="1"/></svg><span>nsys</span></div>
        <div class="ver">2024 R1</div><hr><div class="stu">STUDENT</div>
      </div>
    </div>

    <div class="bottom">
      <section class="panel graph"><div class="phead"><span>Graph</span><i class="dots"></i><svg><use href="#down" x="3.500" y="3.500" width="9" height="9"/></svg><svg><use href="#pin"/></svg><svg><use href="#max"/></svg><svg><use href="#x"/></svg></div><div class="gfill"></div></section>
      <section class="panel tabular"><div class="phead"><span>Tabular Data</span><i class="dots"></i><svg><use href="#down" x="3.500" y="3.500" width="9" height="9"/></svg><svg><use href="#pin"/></svg><svg><use href="#max"/></svg><svg><use href="#x"/></svg></div><div class="tfill"></div></section>
    </div>
  </section>
</main>
</body>
</html>
```

FILE: styles.css
```css
* { box-sizing: border-box; }
html, body { margin: 0; height: 917px; overflow: hidden; }
body {
  width: 1919px; display: grid; grid-template-rows: 45px 87px 785px;
  background: #212121; color: #f0f0f0;
  font: 11.5px/16px "Open Sans", "Noto Sans", sans-serif; letter-spacing: -0.22px;
}
svg { display: block; flex: none; overflow: visible; }
p, h1, ul { margin: 0; padding: 0; list-style: none; }
.defs { position: absolute; width: 0; height: 0; }
.s16 { width: 16px; height: 16px; }
.d6 { width: 6px; height: 6px; }
.d8 { width: 8px; height: 8px; }
.dim { color: #8a8a8a; }

/* title bar and tabs */
.top { background: #0b4093; display: grid; grid-template-rows: 22px 23px; }
.titlebar { display: flex; }
.quick { width: 123px; display: flex; padding-left: 8px; }
.quick .s16 { margin-top: -1px; }
.tsep { width: 1px; height: 19px; margin: 0 5px 0 8px; background: #1a2b50; }
.qdrop { width: 8px; height: 8px; margin: 3px 0 0 5px; }
.context { width: 92px; background: #d7e2f3; color: #3f6cb4; text-align: center; line-height: 22px; letter-spacing: -0.1px; }
.apptitle { margin-left: 5px; line-height: 22px; color: #67737f; letter-spacing: -0.31px; flex: 1; }
.winbtns { display: flex; width: 95px; gap: 18px; padding: 2px 0 0 2px; }
.winbtns svg { width: 16px; height: 16px; }
.tabs { display: flex; line-height: 25px; letter-spacing: -0.17px; }
.tab { white-space: nowrap; }
.file { width: 56px; background: #2b4bdb; text-align: center; line-height: 24px; }
.home { width: 57px; margin-left: 8px; background: #212121; border: 1px solid #4a4a4a; border-bottom: 0; text-align: center; color: #fff; }
.t-env { margin-left: 15px; width: 94px; }
.t-dis { width: 66px; }
.t-sel { width: 76px; }
.t-aut { width: 90px; }
.t-add { width: 73px; }
.t-lrn { flex: 1; }
.launch { display: flex; width: 229px; align-items: center; }
.qinput { width: 160px; height: 21px; border: 1px solid #3c3c3c; background: #212121; color: #6c6c6c; line-height: 20px; padding-left: 3px; letter-spacing: 0; }
.launch .chev { width: 13px; height: 8px; margin: 0 7px 0 4px; }
.help { width: 15px; height: 15px; margin-left: 6px; border-radius: 8px; background: #4a9ada; color: #10233c; font-weight: 700; line-height: 15px; text-align: center; }

/* ribbon */
.ribbon { display: flex; padding-top: 6px; border-top: 1px solid #333; }
.group { height: 75px; border-right: 1px solid #383838; position: relative; white-space: nowrap; }
.gbody { display: flex; height: 60px; }
.glabel { text-align: center; color: #6e6e6e; line-height: 15px; letter-spacing: 0; margin-top: -1px; }
.g-outline { width: 175px; }
.g-outline .glabel, .g-solve .glabel, .g-insert .glabel { padding-left: 4px; }
.g-solve { width: 230px; }
.g-insert { width: 351px; }
.g-tools { width: 502px; }
.g-layout { width: 156px; }
.g-layout .glabel { padding-left: 4px; }
.big { display: flex; flex-direction: column; align-items: center; padding-top: 1px; line-height: 11px; text-align: center; letter-spacing: 0; width: 60px; margin-left: 5px; margin-right: 1px; }
.big > svg:first-child { width: 30px; height: 30px; margin-bottom: 7px; }
.big .d6 { margin-top: 6px; }
.off { color: #5c5c5c; }
.col { display: flex; flex-direction: column; margin-top: -1.5px; }
.col p { display: flex; align-items: center; height: 21px; gap: 1px; }
.col svg { width: 15px; height: 15px; }
.col .d6 { width: 6px; height: 6px; margin: -2px 0 0 2px; }
.c51 { width: 51px; }
.c120 { width: 120px; }
.c81 { width: 81px; }
.c86 { width: 86px; }
.c135 { width: 134px; }
.form { width: 126px; padding-left: 6px; margin-top: -2px; display: grid; grid-template-rows: 21px 21px 20px; letter-spacing: 0; }
.combo { display: flex; border: 1px solid #484848; width: 120px; }
.combo span { flex: 1; line-height: 20px; padding-left: 3px; }
.combo b { width: 14px; background: #333337; display: grid; place-items: center; color: #999; }
.chk { display: flex; align-items: center; gap: 6px; padding-left: 3px; }
.chk svg { width: 13px; height: 13px; }
.cores { display: flex; line-height: 21px; padding-left: 2px; }
.cores span { width: 32px; }
.num { width: 46px; border: 1px solid #484848; line-height: 19px; padding-left: 3px; }
.b-solve { width: 42px; margin: 0; }
.b-res { width: 57px; margin: 0; }
.launcher { position: absolute; right: 2px; bottom: 0; width: 9px; height: 9px; }
.b-ana { width: 51px; margin: 0 2px 0 3px; }
.b-units { width: 44px; margin: 0 0 0 5px; }
.b-work { width: 60px; margin: 0; }
.b-key { width: 58px; margin: 0 4px 0 0; }
.b-full { width: 40px; margin: 0 4px 0 7px; }
.g-tools .glabel { margin-left: 4px; }

/* panels */
.work { display: grid; grid-template-columns: 661px 1254px; column-gap: 4px; background: #24282e; }
.left { display: grid; grid-template-rows: 597px 187px; row-gap: 1px; }
.panel { background: #212121; overflow: hidden; }
.left .panel { padding-top: 1px; }
.phead { height: 20px; display: flex; align-items: center; background: #292d32; border-top: 1px solid #3a3e44; padding: 0 5px 2px; line-height: 16px; white-space: nowrap; color: #f4f4f4; letter-spacing: -0.05px; }
.phead svg { width: 16px; height: 16px; }
.dots { flex: 1; height: 6px; margin: 0 4px; background: radial-gradient(circle at 1px 1px, #484d53 0.6px, transparent 1px) 0 0 / 4px 4px, radial-gradient(circle at 3px 3px, #484d53 0.6px, transparent 1px) 0 0 / 4px 4px; }
.otool { height: 27px; background: #2d2d30; display: flex; padding: 2px 0 2px 10px; letter-spacing: 0; }
.grip { width: 5px; margin: 3px 0; background: radial-gradient(circle at 1px 1px, #555 0.7px, transparent 1px) 0 0 / 4px 4px, radial-gradient(circle at 3px 3px, #555 0.7px, transparent 1px) 0 0 / 4px 4px; }
.otool .combo { width: 100px; margin-left: 7px; background: #212121; }
.otool .combo b { width: 15px; }
.otool .combo span, .search { line-height: 21px; }
.otool .combo span { padding-left: 2px; }
.search { width: 90px; border: 1px solid #484848; background: #212121; color: #5e5e5e; padding-left: 3px; white-space: nowrap; letter-spacing: -0.1px; }
.otool .chev { width: 14px; height: 8px; margin: 7px 6px 0 4px; }
.otool .more { width: 8px; height: 8px; margin-top: 12px; }
.tree { position: relative; font-family: "DejaVu Sans Condensed", "DejaVu Sans", sans-serif; font-stretch: condensed; font-size: 11px; letter-spacing: -0.16px; white-space: nowrap; }
.guides { position: absolute; left: 0; top: 0; }
.row { position: relative; height: 16px; display: flex; align-items: center; line-height: 16px; }
.row > svg { width: 14px; height: 14px; }
.row > svg.st { width: 8px; height: 9px; margin: 6px 1px 0 0; }
.row > svg.bt { height: 11px; margin-top: 5px; }
.row span { margin-left: 4px; padding: 0 1px; }
.row.b { font-weight: 700; color: #fff; letter-spacing: 0.1px; }
.l0 { padding-left: 9px; }
.l1 { padding-left: 36px; }
.row.l0 span, .row.l1 span { margin-left: 5px; }
.l2 { padding-left: 54px; }
.l3 { padding-left: 81px; }
.l4 { padding-left: 108px; }
.row .picked { background: #f0f0f0; color: #111; padding: 0 2px 0 1px; }

.props { display: grid; grid-template-columns: 13px 113px 534px; grid-auto-rows: 18px; white-space: nowrap; line-height: 16px; }
.props > div { border: 1px solid #9a9a9a; border-bottom: 0; padding-left: 3px; }
.props .cat { grid-column: 2 / 4; font-weight: 700; letter-spacing: -0.45px; }
.props .k { border-right: 0; color: #ddd; }
.props .v { background: #465a66; color: #e6ecee; }
.props .last { border-bottom: 1px solid #9a9a9a; height: 19px; }
.props .k.last { letter-spacing: -0.27px; }
.exp { width: 9px; height: 9px; margin: 5px 0 0 2px; border: 1px solid #aaa; background: linear-gradient(#ddd, #ddd) center / 5px 1px no-repeat; }

/* graphics area */
.right { display: grid; grid-template-rows: 27px 718px 40px; row-gap: 0; }
.gtool { background: #2d2d30; display: flex; align-items: center; padding-left: 9px; letter-spacing: -0.1px; white-space: nowrap; }
.gtool > * { flex: none; }
.gtool .grip { height: 19px; margin: 0 8px 0 0; }
.tb { width: 22px; height: 22px; display: grid; place-items: center; }
.tb svg { width: 15px; height: 15px; }
.on { border: 1px solid #3399ff; }
.vs { width: 1px; height: 19px; margin: 0 2.6px 0 3px; background: #4a4a4a; }
.da { width: 11px; display: grid; place-items: center; color: #777; }
.xyz { font: 700 6px "Open Sans", sans-serif; fill: #eee; }
.txt { display: flex; align-items: center; gap: 4px; }
.txt svg:first-child { width: 14px; height: 14px; }
.txt .d6 { margin-left: -1px; }
.t-select { width: 40px; padding-left: 1px; }
.t-mode { width: 65px; }
.t-clip { width: 86px; padding-left: 0; gap: 3px; }
.t-clip .d6 { margin-left: 1px; }
.t-empty { width: 52px; letter-spacing: -0.2px; padding-left: 2px; }
.t-ext { width: 77px; padding-left: 5px; gap: 3px; letter-spacing: -0.3px; }
.t-by { width: 83px; letter-spacing: -0.25px; }
.t-conv { width: 75px; letter-spacing: -0.1px; }
.gtool .more { width: 8px; height: 8px; margin-top: 10px; }
.view { position: relative; background: linear-gradient(#212121, #616161); }
.scene { width: 1254px; height: 718px; }
.flags text { font: 11px "Open Sans", sans-serif; fill: #000; letter-spacing: 0; }
.flags text:last-child { fill: #eee; }
.ruler text { font: 11.5px "Open Sans", sans-serif; fill: #f4f4f4; text-anchor: middle; letter-spacing: -0.5px; }
.ruler text.start { text-anchor: start; letter-spacing: -0.15px; }
.ax { font: 12px "Open Sans", sans-serif; }
.legend { position: absolute; left: 15px; top: 14px; line-height: 15px; color: #e6e6e6; letter-spacing: -0.1px; white-space: nowrap; }
.legend h1 { font-size: 11.5px; line-height: 15px; letter-spacing: -0.25px; }
.legend ul { margin-top: 13px; }
.legend li { display: flex; align-items: center; height: 18px; gap: 6px; letter-spacing: 0; }
.legend b { width: 15px; height: 15px; border: 1px solid #aaa; line-height: 13px; text-align: center; color: #eee; }
.legend .a { background: #6666ff; }
.legend .r { background: #ff3333; }
.legend .c { background: #ffb000; }
.brand { position: absolute; right: 7px; top: 9px; width: 111px; color: #fff; }
.logo { display: flex; height: 36px; }
.logo svg { width: 32px; height: 28px; margin-left: 1px; }
.logo span { font: 700 35px/36px "Open Sans", sans-serif; letter-spacing: -0.3px; margin: -5px 0 0 -1px; }
.ver { font: 700 18.5px/20px Lato, sans-serif; text-align: right; letter-spacing: -0.4px; margin-top: -1px; }
.brand hr { border: 0; height: 2px; background: #aaa; margin: 2px 0 3px; }
.stu { font: 900 19px/22px Lato, sans-serif; text-align: center; letter-spacing: 0; padding-right: 4px; }
.bottom { display: grid; grid-template-columns: 625px 625px; column-gap: 4px; padding-top: 4px; }
.bottom .panel { display: grid; grid-template-rows: 20px 16px; }
.gfill { background: #9e9e9e; }
```
